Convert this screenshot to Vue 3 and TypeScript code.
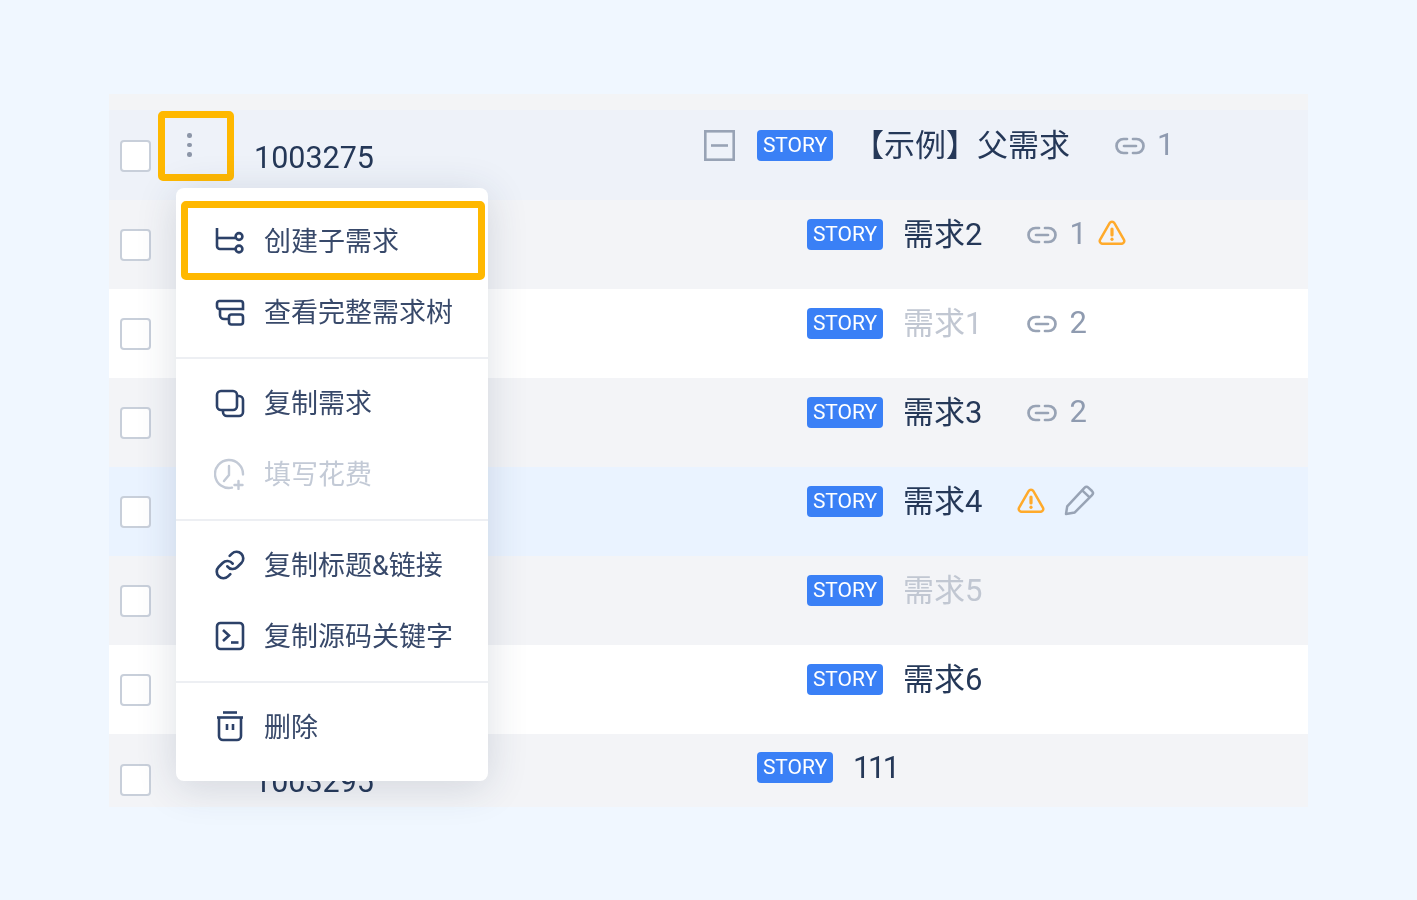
<script setup lang="ts">
interface StoryRow {
  id?: string;
  name: string;
  tone: 'root' | 'gray' | 'white' | 'selected';
  child: boolean;
  muted?: boolean;
  links?: number;
  warn?: boolean;
  edit?: boolean;
}

const rows: StoryRow[] = [
  { id: '1003275', name: '【示例】父需求', tone: 'root', child: false, links: 1 },
  { name: '需求2', tone: 'gray', child: true, links: 1, warn: true },
  { name: '需求1', tone: 'white', child: true, muted: true, links: 2 },
  { name: '需求3', tone: 'gray', child: true, links: 2 },
  { name: '需求4', tone: 'selected', child: true, warn: true, edit: true },
  { name: '需求5', tone: 'gray', child: true, muted: true },
  { name: '需求6', tone: 'white', child: true },
  { id: '1003295', name: '111', tone: 'gray', child: false },
];
</script>

<template>
  <div class="page">
    <div class="table-wrap">
      <div class="table">
        <div class="table-head"></div>
        <div v-for="(row, i) in rows" :key="i" class="row" :class="row.tone">
          <div class="check-cell"><span class="check"></span></div>
          <div class="id-cell">{{ row.id }}</div>
          <div class="story-cell" :class="{ child: row.child, leaf: !row.child && i > 0 }">
            <svg v-if="i === 0" class="collapse" width="31" height="31" viewBox="0 0 31 31" fill="none" stroke="#98a3b5" stroke-width="2.6">
              <rect x="1.3" y="1.3" width="28.4" height="28.4" />
              <path d="M7 15.5h17" />
            </svg>
            <span class="tag">STORY</span>
            <span class="name" :class="{ muted: row.muted }">{{ row.name }}</span>
            <template v-if="row.links">
              <svg class="link" width="32" height="18" viewBox="0 0 32 18" fill="none" stroke="#98a3b5" stroke-width="2.7" stroke-linecap="round">
                <path d="M13 2H9.5a7 7 0 0 0 0 14H13" />
                <path d="M19 2h3.5a7 7 0 0 1 0 14H19" />
                <path d="M10 9h12" />
              </svg>
              <span class="count">{{ row.links }}</span>
            </template>
            <svg v-if="row.warn" class="warn" :class="{ alone: !row.links }" width="28" height="25" viewBox="0 0 28 25" fill="none" stroke="#ffaa2b" stroke-width="2.5" stroke-linecap="round">
              <path d="M11.600 3.200a2.800 2.800 0 0 1 4.800 0L26 19.800a2.800 2.800 0 0 1-2.400 4H4.400a2.800 2.800 0 0 1-2.400-4z" />
              <path d="M14 9v6" stroke-width="3.200" />
              <path d="M14 19.200v.1" stroke-width="3.200" />
            </svg>
            <svg v-if="row.edit" class="edit" width="31" height="31" viewBox="0 0 31 31" fill="none" stroke="#98a3b5" stroke-width="2.5" stroke-linejoin="round">
              <path d="M2 29l1.200-7.600L20.400 2.800a3 3 0 0 1 4.200 0l3.400 3.200a3 3 0 0 1 0 4.200L10.800 27.400z" />
              <path d="M18.200 5.400l7.400 7" />
            </svg>
          </div>
        </div>
      </div>

      <div class="spot more-spot">
        <span class="dot"></span><span class="dot"></span><span class="dot"></span>
      </div>

      <div class="menu">
        <div class="group">
          <div class="item">
            <svg width="32" height="32" viewBox="0 0 32 32" fill="none" stroke="currentColor" stroke-width="2.6">
              <path d="M3 3v18a3 3 0 0 0 3 3h15" />
              <path d="M3 13h18" />
              <circle cx="25" cy="11.5" r="3.4" />
              <circle cx="25" cy="24" r="3.4" />
            </svg>
            <span>创建子需求</span>
          </div>
          <div class="item">
            <svg width="32" height="32" viewBox="0 0 32 32" fill="none" stroke="currentColor" stroke-width="2.6">
              <path d="M6 13H5.500A2.500 2.500 0 0 1 3 10.500V7.500A2.500 2.500 0 0 1 5.500 5h21A2.500 2.500 0 0 1 29 7.500V13H6z" />
              <path d="M6 13v6a4 4 0 0 0 4 4h5" />
              <rect x="15" y="18.500" width="14" height="10" rx="2.500" />
            </svg>
            <span>查看完整需求树</span>
          </div>
        </div>
        <div class="group">
          <div class="item">
            <svg width="32" height="32" viewBox="0 0 32 32" fill="none" stroke="currentColor" stroke-width="2.6">
              <rect x="3" y="4" width="20" height="19" rx="4" />
              <path d="M23 9h2a4 4 0 0 1 4 4v12a4 4 0 0 1-4 4H13a4 4 0 0 1-4-4v-2" />
            </svg>
            <span>复制需求</span>
          </div>
          <div class="item disabled">
            <svg width="32" height="32" viewBox="0 0 32 32" fill="none" stroke="currentColor" stroke-width="2.4" stroke-linecap="round">
              <path d="M18 29.700A14 14 0 1 1 29 16.500" />
              <path d="M15 8v9l-5 6" />
              <path d="M24.500 23v8M20.500 27h8" />
            </svg>
            <span>填写花费</span>
          </div>
        </div>
        <div class="group">
          <div class="item">
            <svg width="32" height="32" viewBox="0 0 24 24" fill="none" stroke="currentColor" stroke-width="2" stroke-linecap="round">
              <path d="M10 13a5 5 0 0 0 7.540.540l3-3a5 5 0 0 0-7.070-7.070l-1.720 1.710" />
              <path d="M14 11a5 5 0 0 0-7.540-.540l-3 3a5 5 0 0 0 7.070 7.070l1.710-1.710" />
            </svg>
            <span>复制标题&amp;链接</span>
          </div>
          <div class="item">
            <svg width="32" height="32" viewBox="0 0 32 32" fill="none" stroke="currentColor" stroke-width="2.6">
              <rect x="3" y="3" width="26" height="26" rx="3.500" />
              <path d="M9 10l6 5.500-6 5.500" />
              <path d="M17 22.500h7.500" />
            </svg>
            <span>复制源码关键字</span>
          </div>
        </div>
        <div class="group">
          <div class="item">
            <svg width="32" height="32" viewBox="0 0 32 32" fill="none" stroke="currentColor" stroke-width="2.6">
              <path d="M9 1.500h14" />
              <path d="M3 6.500h26" />
              <path d="M5 6.500V25a4 4 0 0 0 4 4h14a4 4 0 0 0 4-4V6.500" />
              <path d="M13 13v6M19 13v6" />
            </svg>
            <span>删除</span>
          </div>
        </div>
      </div>

      <div class="spot item-spot"></div>
    </div>
  </div>
</template>

<style scoped>
.page {
  min-height: 900px;
  box-sizing: border-box;
  padding: 94px 109px 0;
  font-family: Roboto, "Noto Sans CJK SC", sans-serif;
}

/* the source is a slightly soft upscaled capture */
.table-wrap {
  position: relative;
  width: 1199px;
  filter: blur(0.4px);
}

.table {
  height: 713px;
  overflow: hidden;
}

.table-head {
  height: 16px;
  background: #f3f4f6;
}

.row {
  display: grid;
  grid-template-columns: 145px 450px 1fr;
  height: 89px;
}

.root { height: 90px; background: #eef2f9; }
.gray { background: #f3f4f7; }
.white { background: #fff; }
.selected { background: #eaf3ff; }

.check-cell {
  display: flex;
  align-items: center;
  padding-left: 11px;
}

.root .check,
.row:last-child .check {
  margin-top: 2px;
}

.check {
  width: 31px;
  height: 32px;
  box-sizing: border-box;
  border: 2px solid #c8cfda;
  border-radius: 4px;
  background: #fff;
}

.id-cell {
  padding-top: 31px;
  font-size: 30.500px;
  line-height: 34px;
  color: #253858;
}

.story-cell {
  display: flex;
  align-items: center;
  align-self: start;
  height: 31px;
  margin-top: 20px;
  white-space: nowrap;
}

.story-cell.child { padding-left: 103px; margin-top: 19px; }
.story-cell.leaf { padding-left: 53px; margin-top: 18px; }
.story-cell.leaf .name { letter-spacing: -2.500px; }

.collapse { margin-right: 22px; }

.tag {
  width: 76px;
  height: 31px;
  border-radius: 4px;
  background: #3a80f6;
  color: #fff;
  font-size: 21px;
  line-height: 31px;
  text-align: center;
}

.name {
  margin-left: 20px;
  font-size: 31px;
  line-height: 31px;
  color: #253858;
}

.name.muted { color: #c1c7d2; }

.link { margin-left: 44px; }

.count {
  margin: -2px 0 0 11px;
  font-size: 31px;
  line-height: 31px;
  color: #8f9bb0;
}

.warn { margin-left: 11px; margin-top: -5px; }
.warn.alone { margin-left: 35px; margin-top: -3px; }
.edit { margin-left: 19px; margin-top: -3px; }

.spot {
  position: absolute;
  box-sizing: border-box;
  border: 7px solid #ffb800;
  border-radius: 5px;
}

.more-spot {
  left: 49px;
  top: 17px;
  width: 76px;
  height: 70px;
  display: flex;
  flex-direction: column;
  align-items: center;
  gap: 5px;
  padding-top: 15px;
}

.dot {
  width: 4.500px;
  height: 4.500px;
  margin-right: 13px;
  border-radius: 50%;
  background: #8c96a8;
}

.item-spot {
  left: 72px;
  top: 107px;
  width: 304px;
  height: 79px;
}

.menu {
  position: absolute;
  left: 67px;
  top: 94px;
  width: 312px;
  box-sizing: border-box;
  padding: 9px 0 10px;
  border-radius: 8px;
  background: #fff;
  box-shadow: 0 6px 40px rgba(37, 56, 88, 0.16);
}

.group { padding: 8px 0; }
.group + .group { border-top: 2px solid #edeff3; }

.item {
  display: flex;
  align-items: center;
  gap: 18px;
  height: 72px;
  padding-left: 38px;
  color: #2c4168;
  font-size: 27px;
  white-space: nowrap;
}

.item span { color: #38496a; margin-bottom: 4px; }
.item + .item span { margin-bottom: 6px; }
.item + .item svg { margin-bottom: 2px; }
.item.disabled { color: #c3cad6; }
.item.disabled span { color: #c3cad6; }
</style>

<style>
body {
  background: #f0f7ff;
}
</style>
